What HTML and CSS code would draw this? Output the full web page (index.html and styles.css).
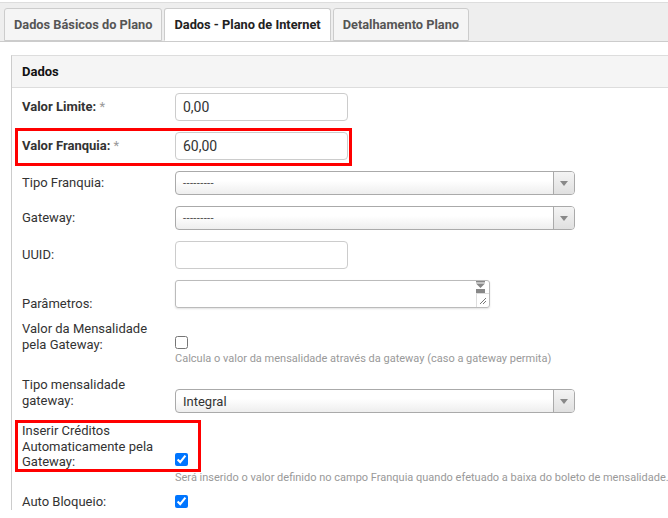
FILE: index.html
```html
<!DOCTYPE html>
<html lang="pt">
<head>
<meta charset="utf-8">
<link rel="stylesheet" href="styles.css">
</head>
<body>
<div class="page">
  <div class="tabbar">
    <div class="tab">Dados Básicos do Plano</div>
    <div class="tab active">Dados - Plano de Internet</div>
    <div class="tab">Detalhamento Plano</div>
  </div>
  <div class="panel">
    <div class="panel-head">Dados</div>
    <div class="panel-body">
      <div class="row r-input">
        <label class="lbl req">Valor Limite: <span class="ast">*</span></label>
        <input class="txt short" type="text" value="0,00">
      </div>
      <div class="row r-input mark mark1">
        <label class="lbl req">Valor Franquia: <span class="ast">*</span></label>
        <input class="txt short" type="text" value="60,00">
      </div>
      <div class="row r-select">
        <label class="lbl">Tipo Franquia:</label>
        <div class="sel"><span class="sel-text dash">---------</span><span class="sel-arrow"></span></div>
      </div>
      <div class="row r-select">
        <label class="lbl">Gateway:</label>
        <div class="sel"><span class="sel-text dash">---------</span><span class="sel-arrow"></span></div>
      </div>
      <div class="row r-input">
        <label class="lbl">UUID:</label>
        <input class="txt short" type="text" value="">
      </div>
      <div class="row r-area">
        <label class="lbl">Parâmetros:</label>
        <div class="area">
          <span class="area-spin">
            <svg width="11" height="12" viewBox="0 0 11 12"><path d="M1 0h9v1.5H1z M1 2.5h9L5.5 7z M1 8h9v4H1z" fill="#888"/></svg>
          </span>
          <span class="area-grip">
            <svg width="8" height="8" viewBox="0 0 8 8"><path d="M7 1L1 7M7 4L4 7" stroke="#777" stroke-width="1"/></svg>
          </span>
        </div>
      </div>
      <div class="row r-check1">
        <label class="lbl">Valor da Mensalidade pela Gateway:</label>
        <div class="ctl">
          <input class="chk" type="checkbox">
          <div class="help">Calcula o valor da mensalidade através da gateway (caso a gateway permita)</div>
        </div>
      </div>
      <div class="row r-tipo">
        <label class="lbl">Tipo mensalidade gateway:</label>
        <div class="ctl">
          <div class="sel"><span class="sel-text">Integral</span><span class="sel-arrow"></span></div>
        </div>
      </div>
      <div class="row r-check2 mark mark2">
        <label class="lbl">Inserir Créditos Automaticamente pela Gateway:</label>
        <div class="ctl">
          <input class="chk" type="checkbox" checked>
          <div class="help nowrap">Será inserido o valor definido no campo Franquia quando efetuado a baixa do boleto de mensalidade.</div>
        </div>
      </div>
      <div class="row r-check3">
        <label class="lbl">Auto Bloqueio:</label>
        <div class="ctl"><input class="chk" type="checkbox" checked></div>
      </div>
    </div>
  </div>
</div>
</body>
</html>
```

FILE: styles.css
```css
*, *::before, *::after { box-sizing: border-box; }
html, body { margin: 0; padding: 0; }
body {
  width: 668px;
  height: 518px;
  overflow: hidden;
  background: #fff;
  font-family: Roboto, "Liberation Sans", sans-serif;
  font-size: 13px;
  color: #333;
}
.page { padding-top: 2px; width: 668px; overflow: hidden; }

.tabbar {
  display: flex;
  gap: 2px;
  background: #eee;
  border-top: 1px solid #ddd;
  border-bottom: 1px solid #ccc;
  padding: 5px 0 0 4px;
  height: 40px;
}
.tab {
  height: 33px;
  margin-bottom: -1px;
  padding: 0 9px;
  display: flex;
  align-items: center;
  font-weight: 700;
  font-size: 12.8px;
  color: #555;
  background: #f5f5f5;
  border: 1px solid #ccc;
  border-radius: 3px 3px 0 0;
}
.tab.active {
  background: #fff;
  color: #222;
  border-bottom-color: #fff;
}

.panel {
  margin: 13px 0 0 11px;
  width: 700px;
  border-left: 1px solid #ccc;
  border-top: 1px solid #ddd;
}
.panel-head {
  height: 32px;
  background: #f5f5f5;
  border-bottom: 1px solid #ddd;
  padding-left: 10px;
  display: flex;
  align-items: center;
  font-weight: 700;
  font-size: 13px;
  color: #111;
}
.panel-body { padding: 5px 0 0 10px; }

.row { display: flex; position: relative; }
.lbl {
  width: 145px;
  margin-right: 8px;
  flex: none;
  line-height: 15.5px;
  font-size: 13px;
  color: #333;
}
.lbl.req { font-weight: 700; }
.ast { color: #999; font-weight: 400; }

.r-input { align-items: center; margin-bottom: 11px; }
.r-select { align-items: center; margin-bottom: 11px; }
.r-area { align-items: flex-end; margin-bottom: 10px; }
.r-check1 { margin-bottom: 11px; }
.r-check1 .ctl { padding-top: 15px; }
.r-tipo { margin-bottom: 10px; }
.r-tipo .ctl { padding-top: 12px; }
.r-check2 .ctl { padding-top: 30px; }
.r-check2 { margin-bottom: 9px; }
.r-check3 { align-items: center; }

.txt {
  width: 173px;
  height: 28px;
  border: 1px solid #ccc;
  border-radius: 4px;
  padding: 0 7px;
  font-family: Roboto, "Liberation Sans", sans-serif;
  font-size: 14px;
  color: #333;
  margin: 0;
  outline: none;
}

.sel {
  width: 400px;
  height: 24px;
  border: 1px solid #aaa;
  border-radius: 4px;
  background: linear-gradient(#fff 0%, #fff 40%, #eee 100%);
  display: flex;
  align-items: center;
  overflow: hidden;
}
.sel-text {
  flex: 1;
  padding-left: 7px;
  font-size: 13px;
  color: #333;
}
.sel-text.dash { font-size: 11px; color: #444; letter-spacing: 0.4px; }
.sel-arrow {
  width: 21px;
  height: 100%;
  border-left: 1px solid #aaa;
  background: linear-gradient(#f4f4f4, #e0e0e0);
  position: relative;
}
.sel-arrow::after {
  content: "";
  position: absolute;
  left: 6px;
  top: 9px;
  border-left: 4px solid transparent;
  border-right: 4px solid transparent;
  border-top: 5px solid #888;
}

.area {
  width: 315px;
  height: 28px;
  border: 1px solid #bbb;
  border-radius: 3px;
  margin-bottom: 3px;
  position: relative;
  box-shadow: 0 1px 2px rgba(0,0,0,0.12);
}
.area-spin {
  position: absolute;
  right: 2px;
  top: 0;
  width: 12px;
  height: 12px;
  display: flex;
}
.area-grip {
  position: absolute;
  right: 0;
  bottom: 0;
  width: 13px;
  height: 14px;
  border-left: 1px solid #ddd;
  border-top: 1px solid #ddd;
  display: flex;
  align-items: flex-end;
  justify-content: flex-end;
  padding: 0 2px 2px 0;
}

.chk {
  display: block;
  margin: 0;
  width: 13px;
  height: 13px;
}
.help {
  margin-top: 2px;
  font-size: 11px;
  line-height: 15px;
  color: #999;
}
.r-check2 .help { margin-top: 4px; }
.nowrap { white-space: nowrap; }

.mark::after {
  content: "";
  position: absolute;
  border: 3px solid #f00;
  pointer-events: none;
}
.mark1::after { left: -7px; top: -4px; width: 337px; height: 38px; }
.mark2::after { left: -7px; top: -3px; width: 186px; height: 52px; }
```
